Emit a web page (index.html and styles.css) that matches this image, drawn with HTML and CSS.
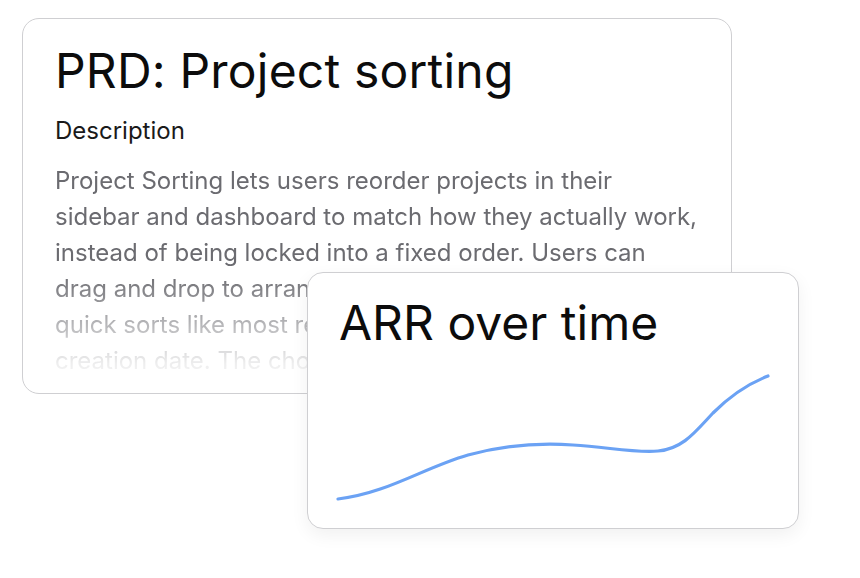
FILE: index.html
```html
<!DOCTYPE html>
<html lang="en">
<head>
<meta charset="utf-8">
<title>PRD: Project sorting</title>
<link rel="stylesheet" href="styles.css">
</head>
<body>
<main class="stage">
  <article class="doc-card">
    <h1 class="doc-title">PRD: Project sorting</h1>
    <h2 class="doc-heading">Description</h2>
    <p class="doc-body">Project Sorting lets users reorder projects in their<br>
      sidebar and dashboard to match how they actually work,<br>
      instead of being locked into a fixed order. Users can<br>
      drag and drop to arrange projects manually, or apply<br>
      quick sorts like most recent, alphabetical, or<br>
      creation date. The chosen order is saved per user.</p>
  </article>

  <section class="chart-card">
    <h2 class="chart-title">ARR over time</h2>
    <svg class="chart" viewBox="0 0 492 256" width="492" height="256" aria-hidden="true">
      <path d="M30 226 C 80 220, 115 195, 160 182 C 200 171, 235 170, 265 172 C 300 174, 325 180, 350 178 C 375 176, 388 158, 405 140 C 425 120, 442 110, 460 103" fill="none" stroke="#6ba2f4" stroke-width="3.2" stroke-linecap="round"/>
    </svg>
  </section>
</main>
</body>
</html>
```
FILE: styles.css
```css
* { box-sizing: border-box; }

html, body {
  margin: 0;
  background: #ffffff;
}

body {
  font-family: Inter, "Noto Sans", "Liberation Sans", sans-serif;
  width: 860px;
  height: 578px;
  overflow: hidden;
}

.stage {
  position: relative;
  width: 860px;
  height: 578px;
  padding: 18px 0 0 22px;
}

.doc-card {
  width: 710px;
  height: 376px;
  border: 1.5px solid #cfcfd2;
  border-radius: 17px;
  background: #fff;
  padding: 22px 0 0 32px;
  overflow: hidden;
}

.doc-title {
  margin: 0;
  font-size: 48px;
  font-weight: 400;
  line-height: 60px;
  color: #0c0c0c;
  letter-spacing: 0.2px;
}

.doc-heading {
  margin: 15px 0 0;
  font-size: 24px;
  font-weight: 400;
  line-height: 30px;
  color: #1a1a1a;
}

.doc-body {
  margin: 17px 0 0;
  font-size: 24px;
  line-height: 36px;
  color: #6b6b70;
  white-space: nowrap;
  -webkit-mask-image: linear-gradient(to bottom, #000 0px, #000 110px, rgba(0,0,0,0.5) 160px, rgba(0,0,0,0.12) 200px, rgba(0,0,0,0) 230px);
  mask-image: linear-gradient(to bottom, #000 0px, #000 110px, rgba(0,0,0,0.5) 160px, rgba(0,0,0,0.12) 200px, rgba(0,0,0,0) 230px);
}

.chart-card {
  position: absolute;
  left: 307px;
  top: 272px;
  width: 492px;
  height: 257px;
  border: 1.5px solid #cfcfd2;
  border-radius: 16px;
  background: #fff;
  box-shadow: 0 6px 18px rgba(0, 0, 0, 0.06);
  overflow: hidden;
}

.chart-title {
  margin: 0;
  padding: 20px 0 0 31px;
  font-size: 48px;
  font-weight: 400;
  line-height: 60px;
  color: #0c0c0c;
}

.chart {
  position: absolute;
  left: 0;
  top: 0;
}
```
